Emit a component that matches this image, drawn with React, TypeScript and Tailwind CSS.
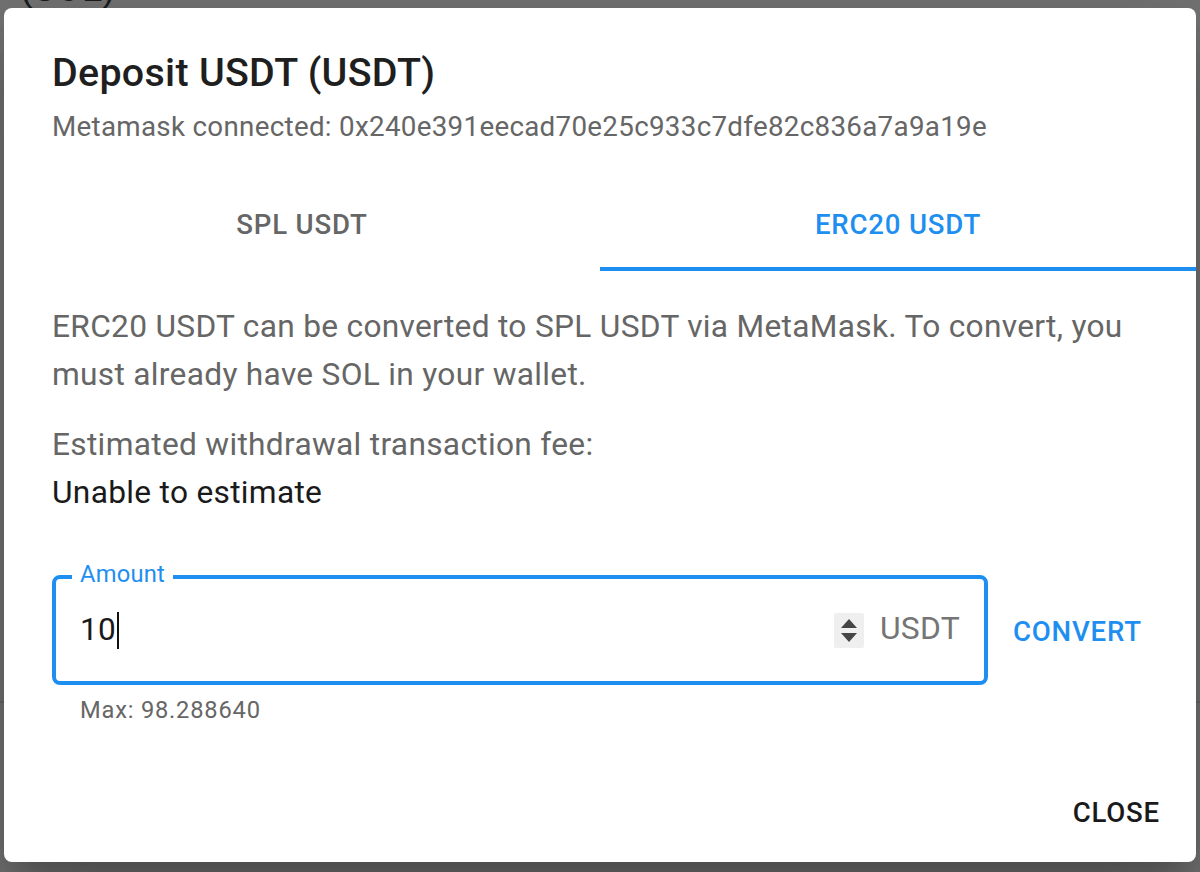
import React from "react";

export default function App() {
  return (
    <div className="relative w-[1200px] h-[872px] overflow-hidden bg-[#747474] font-['Roboto',sans-serif]">
      {/* faint page content behind the backdrop */}
      <div className="absolute left-[20px] top-[-34px] text-[38px] text-[#1c1c1c] leading-[44px]">(SOL)</div>
      <div className="absolute left-0 right-0 top-[701px] h-[2px] bg-[#666666]" />

      {/* dialog */}
      <div className="absolute left-[4px] top-[8px] w-[1192px] h-[854px] bg-white rounded-[8px] shadow-[0_22px_30px_-14px_rgba(0,0,0,0.2),0_48px_76px_6px_rgba(0,0,0,0.14),0_18px_92px_16px_rgba(0,0,0,0.12)] flex flex-col">
        <h2 className="mt-[39px] px-[48px] text-[39.4px] leading-[52px] font-medium tracking-[0.0075em] text-[#1f1f1f]">
          Deposit USDT (USDT)
        </h2>
        <p className="mt-[8px] px-[48px] text-[27.75px] leading-[40px] tracking-[0.01071em] text-[#666666]">
          Metamask connected: 0x240e391eecad70e25c933c7dfe82c836a7a9a19e
        </p>

        {/* tabs */}
        <div className="mt-[29px] flex h-[95px]">
          <button className="flex-1 h-full border-b-[4px] border-transparent pt-[6px] text-[27.6px] leading-[85px] font-medium uppercase tracking-[0.02857em] text-[#666666]">
            SPL USDT
          </button>
          <button className="flex-1 h-full border-b-[4px] border-[#1e8ff0] pt-[6px] text-[27.6px] leading-[85px] font-medium uppercase tracking-[0.02857em] text-[#1e8ff0]">
            ERC20 USDT
          </button>
        </div>

        <div className="px-[48px] flex flex-col">
          <p className="mt-[32px] text-[31.7px] leading-[48px] tracking-[0.00938em] text-[#666666] whitespace-nowrap">
            ERC20 USDT can be converted to SPL USDT via MetaMask. To convert, you
            <br />
            must already have SOL in your wallet.
          </p>
          <p className="mt-[22px] text-[31.7px] leading-[48px] tracking-[0.00938em] text-[#666666]">
            Estimated withdrawal transaction fee:
          </p>
          <p className="text-[31.7px] leading-[48px] tracking-[0.00938em] text-[#1a1a1a]">
            Unable to estimate
          </p>

          {/* amount field */}
          <div className="mt-[48px] flex items-start">
            <div className="flex flex-col">
              <fieldset className="w-[936px] border-[4px] border-[#1e8ff0] rounded-[8px] m-0 p-0">
                <legend className="ml-[16px] px-[8px] h-[24px] text-[23.7px] leading-[24px] tracking-[0.00938em] text-[#1e8ff0]">
                  <span className="relative top-[-3px]">Amount</span>
                </legend>
                <div className="h-[92px] flex items-center pl-[24px] pr-[24px] pb-[10px]">
                  <div className="flex-1 flex items-center text-[31.6px] leading-[40px] tracking-[0.00938em] text-[#1a1a1a]">
                    <span>10</span>
                    <span className="ml-[1px] w-[2px] h-[37px] bg-[#111111]" />
                  </div>
                  <div className="w-[30px] h-[35px] bg-[#efefef] rounded-[2px] flex flex-col items-center justify-center gap-[5px]">
                    <svg width="16" height="9" viewBox="0 0 16 9">
                      <path d="M8 0 L16 9 L0 9 Z" fill="#454545" />
                    </svg>
                    <svg width="16" height="9" viewBox="0 0 16 9">
                      <path d="M0 0 L16 0 L8 9 Z" fill="#454545" />
                    </svg>
                  </div>
                  <span className="ml-[16px] mb-[4px] text-[31.8px] leading-[40px] tracking-[0.00938em] text-[#757575]">
                    USDT
                  </span>
                </div>
              </fieldset>
              <p className="mt-[9px] ml-[28px] text-[23.7px] leading-[32px] tracking-[0.03333em] text-[#666666]">
                Max: 98.288640
              </p>
            </div>
            <button className="mt-[47px] ml-[25px] text-[27.6px] leading-[40px] font-medium uppercase tracking-[0.02857em] text-[#1e8ff0]">
              CONVERT
            </button>
          </div>
        </div>

        <div className="flex-1 flex items-end justify-end pr-[36px] pb-[29px]">
          <button className="text-[27.6px] leading-[40px] font-medium uppercase tracking-[0.02857em] text-[#1a1a1a]">
            CLOSE
          </button>
        </div>
      </div>
    </div>
  );
}
